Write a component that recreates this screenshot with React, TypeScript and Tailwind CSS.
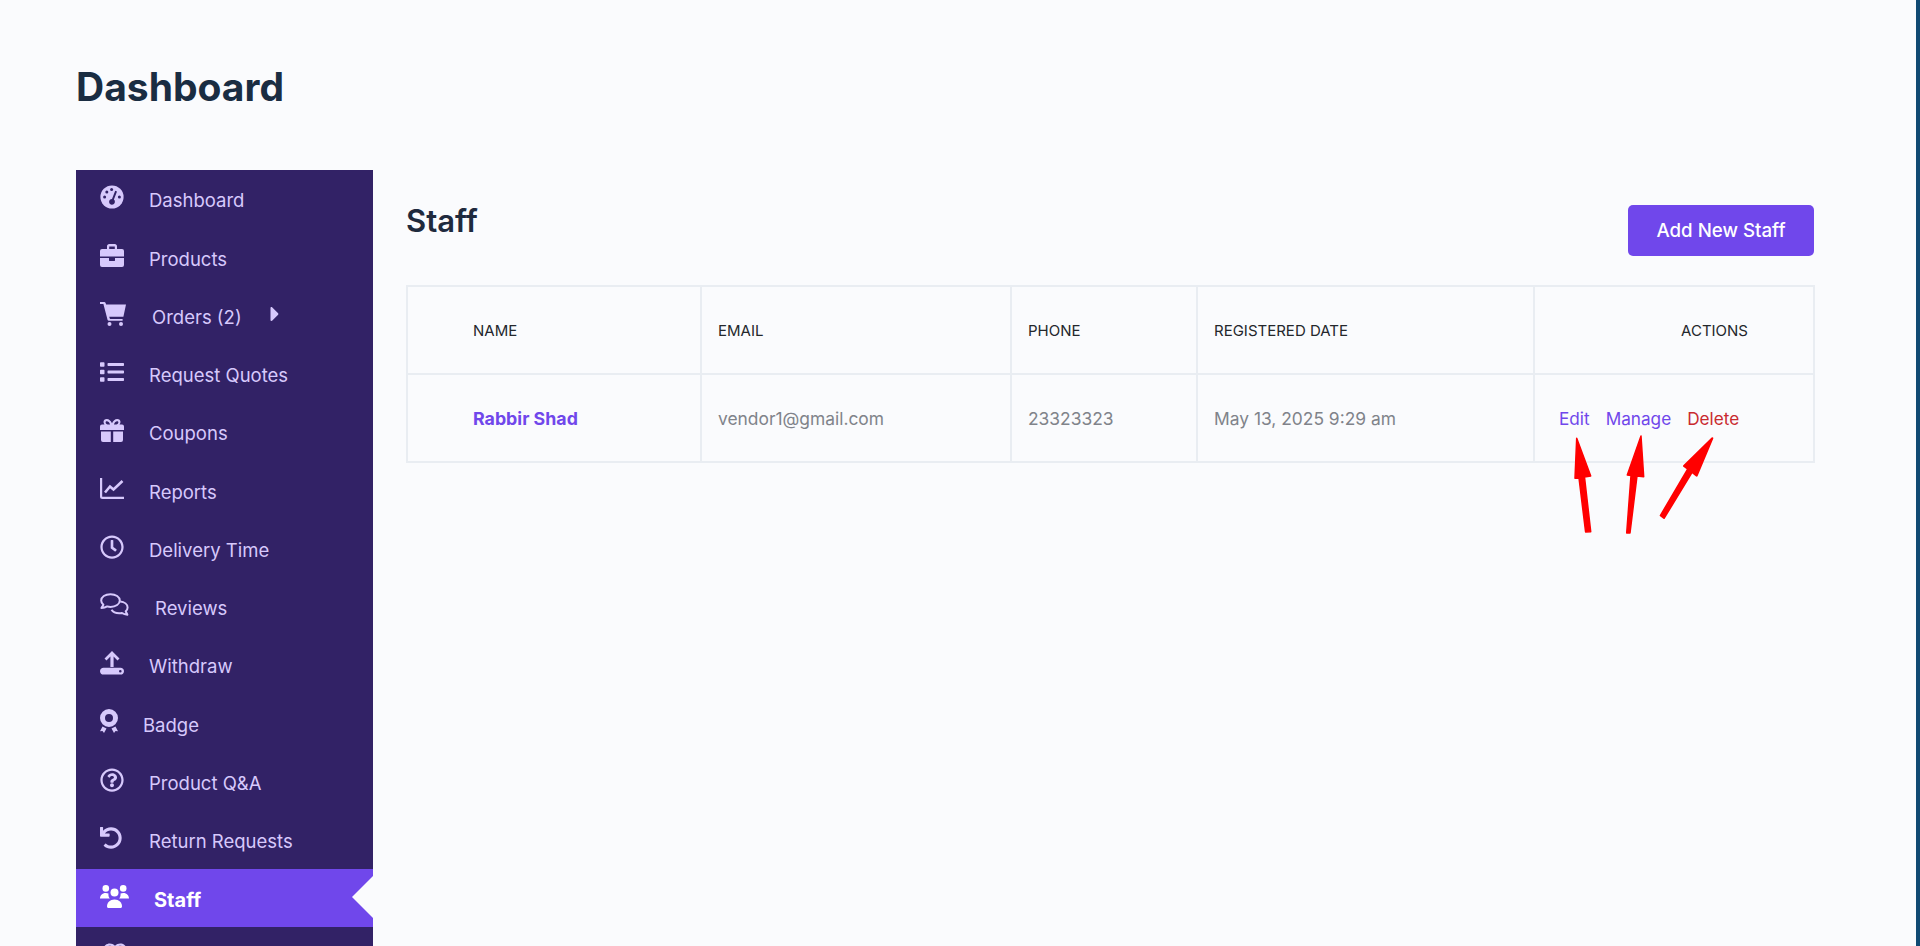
import React from 'react';
import { FaList, FaRegClock, FaRegQuestionCircle, FaUndo, FaCaretRight, FaRegHeart } from 'react-icons/fa';

type IconProps = { className?: string };

const GaugeIcon = ({ className }: IconProps) => (
  <svg viewBox="0 0 24 24" className={className}>
    <circle cx="12" cy="12" r="11.6" fill="currentColor" />
    <g fill="#322266">
      <circle cx="4.6" cy="12" r="1.5" />
      <circle cx="6.8" cy="7" r="1.5" />
      <circle cx="11.6" cy="4.6" r="1.5" />
      <circle cx="19.4" cy="12" r="1.5" />
      <path d="M15.2 5.8 17 6.5 13.9 14.6a2.9 2.9 0 1 1-1.9-.7z" />
    </g>
  </svg>
);

const BriefcaseIcon = ({ className }: IconProps) => (
  <svg viewBox="0 0 24 23" fill="currentColor" className={className}>
    <path d="M7 5V2.2C7 1 8 0 9.2 0h5.6C16 0 17 1 17 2.2V5h-2.2V2.4H9.2V5z" />
    <path d="M2 5h20a2 2 0 0 1 2 2v5.5H0V7a2 2 0 0 1 2-2z" />
    <path d="M0 14h9v2.2c0 .5.4.9.9.9h4.2c.5 0 .9-.4.9-.9V14h9v7a2 2 0 0 1-2 2H2a2 2 0 0 1-2-2z" />
  </svg>
);

const CartIcon = ({ className }: IconProps) => (
  <svg viewBox="0 0 26 24" fill="currentColor" className={className}>
    <path d="M0 0h4.2c.7 0 1.2.4 1.4 1l.5 1.5H26l-2.6 12.2H9.2L10 17h12.6v1.8H8.8c-.6 0-1-.3-1.2-.8L3.4 2H0z" />
    <circle cx="9.5" cy="22" r="2" />
    <circle cx="21" cy="22" r="2" />
  </svg>
);

const GiftIcon = ({ className }: IconProps) => (
  <svg viewBox="0 0 24 23" fill="currentColor" className={className}>
    <path fillRule="evenodd" d="M6.8 0c2.3 0 4 1.7 5.2 4.2C13.2 1.7 14.9 0 17.2 0c2 0 3.3 1.3 3.3 3.1 0 1-.4 1.8-1 2.4H22a2 2 0 0 1 2 2V11H0V7.5a2 2 0 0 1 2-2h2.5c-.6-.6-1-1.4-1-2.4C3.500 1.300 4.800 0 6.800 0zm.1 2.200c-.8 0-1.300.400-1.300 1.100 0 1 .900 2.200 2.200 2.200h2.300C9.300 3.300 8.200 2.200 6.900 2.200zm10.200 0c-1.300 0-2.400 1.100-3.200 3.300h2.300c1.300 0 2.200-1.200 2.200-2.200 0-.7-.5-1.100-1.300-1.100z" />
    <path d="M1 12.500h9.800V23H3a2 2 0 0 1-2-2zM13.200 12.500H23V21a2 2 0 0 1-2 2h-7.800z" />
  </svg>
);

const ChartIcon = ({ className }: IconProps) => (
  <svg viewBox="0 0 24 21" fill="none" stroke="currentColor" strokeWidth="2.200" className={className}>
    <path d="M1.100 0v18.500c0 .8.600 1.400 1.400 1.400H24" />
    <path d="M5 14.500l5-6 3.500 3L22.500 3" strokeWidth="2.600" />
  </svg>
);

const CommentsIcon = ({ className }: IconProps) => (
  <svg viewBox="0 0 29 23" fill="none" stroke="currentColor" strokeWidth="2" strokeLinejoin="round" className={className}>
    <path d="M10.500 1.200C5 1.200 1.200 3.900 1.200 7.500c0 1.700.8 3.100 2.200 4.300L1.400 15c2.400 0 4.300-.6 5.800-1.600 1 .3 2.200.5 3.300.5 5.300 0 9.300-2.800 9.300-6.400S15.800 1.200 10.500 1.200z" />
    <path d="M20.200 8.600c4.300.4 7.400 2.800 7.400 5.900 0 1.500-.7 2.800-1.900 3.800l1.700 3.500c-2.300-.2-4.100-.9-5.400-1.800-1 .2-1.900.3-2.800.3-3.500 0-6.400-1.400-7.700-3.500" />
  </svg>
);

const WithdrawIcon = ({ className }: IconProps) => (
  <svg viewBox="0 0 24 24" fill="currentColor" className={className}>
    <path d="M12 0l7.500 7.600-2 1.900-3.900-3.900V16h-3.200V5.600L6.500 9.500l-2-1.900z" />
    <path fillRule="evenodd" d="M3.500 16.800h17c2 0 3.500 1.500 3.500 3.400s-1.500 3.400-3.500 3.400h-17C1.500 23.600 0 22.100 0 20.200s1.500-3.400 3.500-3.400zm16.800 2.100a1.300 1.300 0 1 0 0 2.600 1.300 1.300 0 0 0 0-2.600z" />
  </svg>
);

const BadgeIcon = ({ className }: IconProps) => (
  <svg viewBox="0 0 18 24" fill="currentColor" className={className}>
    <path fillRule="evenodd" d="M9 0a9 9 0 1 1 0 18A9 9 0 0 1 9 0zm0 5a4 4 0 1 0 0 8 4 4 0 0 0 0-8z" />
    <path d="M2.500 17.500l4 2L4 24l-1.500-2-2.500.3zM15.500 17.500l-4 2L14 24l1.500-2 2.500.3z" />
  </svg>
);

const UsersIcon = ({ className }: IconProps) => (
  <svg viewBox="0 0 29 23" fill="currentColor" className={className}>
    <circle cx="5.800" cy="3.400" r="3.300" />
    <circle cx="23.200" cy="3.400" r="3.300" />
    <circle cx="14.500" cy="7.400" r="4" />
    <path d="M0 13.500C0 10.500 2 8 5.800 8c1 0 1.900.2 2.700.5-.3 1.800.2 3.600 1.300 5z" />
    <path d="M29 13.500C29 10.500 27 8 23.200 8c-1 0-1.900.2-2.700.5.300 1.800-.2 3.600-1.300 5z" />
    <path d="M7 21.500c0-4 3-7 7.500-7s7.500 3 7.500 7c0 .9-.6 1.500-1.500 1.500h-12C7.600 23 7 22.400 7 21.500z" />
  </svg>
);

const menu = [
  { icon: GaugeIcon, label: 'Dashboard', gap: 'ml-[25px]', size: 'w-[24px] h-[24px]' },
  { icon: BriefcaseIcon, label: 'Products', gap: 'ml-[25px]', size: 'w-[24px] h-[23px]' },
  { icon: CartIcon, label: 'Orders (2)', gap: 'ml-[28px]', size: 'w-[26px] h-[24px]', caret: true },
  { icon: FaList, label: 'Request Quotes', gap: 'ml-[25px]', size: 'w-[24px] h-[24px]' },
  { icon: GiftIcon, label: 'Coupons', gap: 'ml-[25px]', size: 'w-[24px] h-[23px]' },
  { icon: ChartIcon, label: 'Reports', gap: 'ml-[25px]', size: 'w-[24px] h-[21px]' },
  { icon: FaRegClock, label: 'Delivery Time', gap: 'ml-[25px]', size: 'w-[24px] h-[24px]' },
  { icon: CommentsIcon, label: 'Reviews', gap: 'ml-[31px]', size: 'w-[29px] h-[23px]' },
  { icon: WithdrawIcon, label: 'Withdraw', gap: 'ml-[25px]', size: 'w-[24px] h-[24px]' },
  { icon: BadgeIcon, label: 'Badge', gap: 'ml-[19px]', size: 'w-[18px] h-[24px]' },
  { icon: FaRegQuestionCircle, label: 'Product Q&A', gap: 'ml-[25px]', size: 'w-[24px] h-[24px]' },
  { icon: FaUndo, label: 'Return Requests', gap: 'ml-[25px]', size: 'w-[22px] h-[22px]' },
  { icon: UsersIcon, label: 'Staff', gap: 'ml-[30px]', size: 'w-[29px] h-[23px]', active: true },
];

const columns = ['NAME', 'EMAIL', 'PHONE', 'REGISTERED DATE'];

export default function App() {
  return (
    <div className="relative h-[946px] overflow-hidden bg-[#fafbfd] border-r-4 border-[#104a73] font-['Inter',sans-serif]">
      <div className="pl-[76px]">
        <h1 className="pt-[63px] h-[170px] text-[39px] leading-[48px] font-bold text-[#1a2d42]">Dashboard</h1>
        <div className="flex">
          <aside className="w-[297px] shrink-0 bg-[#322266]">
            {menu.map((item) => (
              <div
                key={item.label}
                className={
                  item.active
                    ? 'relative flex items-center h-[58.25px] pl-[24px] bg-[#7047eb] text-white'
                    : 'relative flex items-center h-[58.25px] pl-[24px] text-[#d7c9fc]'
                }
              >
                <span className="flex w-[24px] mb-[4px]">
                  <item.icon className={`block shrink-0 ${item.size}`} />
                </span>
                <span
                  className={
                    item.active ? `${item.gap} mt-[4px] text-[20px] font-bold` : `${item.gap} mt-[4px] text-[18.5px]`
                  }
                >
                  {item.label}
                </span>
                {item.caret && <FaCaretRight className="ml-[21px] mb-[3px] w-[24px] h-[24px]" />}
                {item.active && (
                  <span className="absolute right-0 top-[7px] border-y-[21px] border-r-[21px] border-y-transparent border-r-[#fafbfd]" />
                )}
              </div>
            ))}
            <div className="flex items-center h-[58.25px] pl-[27px] text-[#d7c9fc]">
              <FaRegHeart className="w-[24px] h-[24px] mb-[4px]" />
            </div>
          </aside>
          <main className="w-[1441px] shrink-0 pl-[33px] pt-[35px] pr-0">
            <div className="flex justify-between w-[1408px] h-[80px]">
              <h2 className="text-[31px] leading-[36px] -mt-[2px] font-semibold text-[#1f2a3d]">Staff</h2>
              <button className="w-[186px] h-[51px] pt-[2px] rounded-[5px] bg-[#7047eb] text-white text-[18.7px] font-medium">
                Add New Staff
              </button>
            </div>
            <table className="w-[1407px] table-fixed border-collapse border border-[#e5e9ef]">
              <colgroup>
                <col className="w-[294px]" />
                <col className="w-[310px]" />
                <col className="w-[186px]" />
                <col className="w-[337px]" />
                <col className="w-[280px]" />
              </colgroup>
              <thead>
                <tr className="h-[88px]">
                  {columns.map((c, i) => (
                    <th
                      key={c}
                      className={`border-2 border-[#e9edf2] pt-[2px] text-left text-[15px] font-normal text-[#24272c] ${
                        i === 0 ? 'pl-[65px]' : 'pl-[16px]'
                      }`}
                    >
                      {c}
                    </th>
                  ))}
                  <th className="border-2 border-[#e9edf2] pt-[2px] text-right pr-[65px] text-[15px] font-normal text-[#24272c]">
                    ACTIONS
                  </th>
                </tr>
              </thead>
              <tbody>
                <tr className="h-[88px] text-[17.4px] text-[#80838a]">
                  <td className="border-2 border-[#e9edf2] pl-[65px] pt-[2px] font-bold text-[17.8px] text-[#7047eb]">Rabbir Shad</td>
                  <td className="border-2 border-[#e9edf2] pl-[16px] pt-[2px]">vendor1@gmail.com</td>
                  <td className="border-2 border-[#e9edf2] pl-[16px] pt-[2px]">23323323</td>
                  <td className="border-2 border-[#e9edf2] pl-[16px] pt-[2px]">May 13, 2025 9:29 am</td>
                  <td className="border-2 border-[#e9edf2] pl-[24px] pt-[2px]">
                    <div className="flex gap-[16px] text-[17.2px]">
                      <span className="text-[#7047eb]">Edit</span>
                      <span className="text-[#7047eb]">Manage</span>
                      <span className="text-[#c92a2f]">Delete</span>
                    </div>
                  </td>
                </tr>
              </tbody>
            </table>
          </main>
        </div>
      </div>
      {/* red annotation arrows */}
      <svg viewBox="0 0 150 110" className="absolute left-[1570px] top-[430px] w-[150px] h-[110px]">
        <g fill="#ff0000" stroke="#ff0000" strokeLinecap="round" strokeLinejoin="round">
          <path d="M6.700 8.300 20.700 46 14.500 47 20.700 101.700 15.600 102 9 48 5 48.300z" strokeWidth="1.500" />
          <path d="M71 6 73.700 46.700 67 46 60 103 56.700 103 61 45.500 57.300 45z" strokeWidth="1.500" />
          <path d="M142.300 8.300 126.700 45.700 122 42 94 88 90.700 85.500 118 39 114 36z" strokeWidth="2" />
        </g>
      </svg>
    </div>
  );
}
